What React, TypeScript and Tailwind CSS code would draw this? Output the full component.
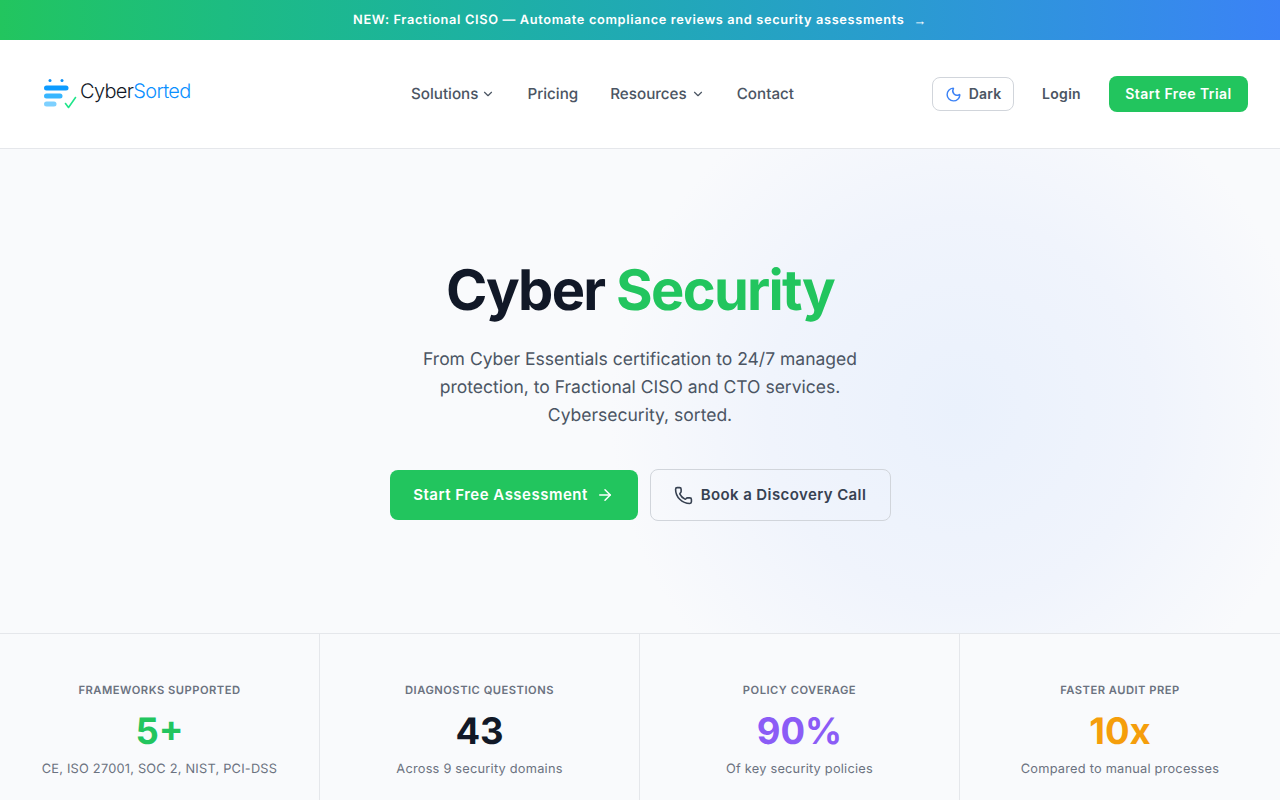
import { ChevronDown, Moon, ArrowRight, Phone } from "lucide-react";

function Logo() {
  return (
    <div className="flex items-center gap-[2px]">
      <svg width="36" height="32" viewBox="0 0 36 32" fill="none" className="block">
        <circle cx="8" cy="2.5" r="1.5" fill="#0b8ff5" />
        <circle cx="20" cy="2.5" r="1.5" fill="#0b8ff5" />
        <rect x="2" y="7.5" width="24.5" height="5" rx="2.5" fill="#0d9bff" />
        <rect x="2" y="15.5" width="18.5" height="5" rx="2.5" fill="#38b6ff" />
        <rect x="2" y="23.5" width="12.5" height="5" rx="2.5" fill="#7dd0ff" />
        <path d="M23.5 25.5 L26.5 29.5 L33.5 19.5" stroke="#1fe58a" strokeWidth="1.6" strokeLinecap="round" strokeLinejoin="round" />
      </svg>
      <span className="mb-[7px] text-[20px] font-light tracking-[-0.67px] text-[#111827]">
        Cyber<span className="text-[#0a90ff]">Sorted</span>
      </span>
    </div>
  );
}

function Stat({ label, value, color, note, last }: { label: string; value: string; color: string; note: string; last?: boolean }) {
  return (
    <div className={`flex flex-col items-center px-6 pt-[49px] pb-6 h-[167px] ${last ? "" : "border-r border-[#e5e7eb]"}`}>
      <div className="text-[11.2px] leading-[14px] font-semibold tracking-[0.5px] uppercase text-[#6b7280]">{label}</div>
      <div className={`mt-[14px] text-[36.5px] leading-[40px] font-bold ${color}`}>{value}</div>
      <div className="mt-[9px] text-[12.8px] leading-[20px] tracking-[0.22px] text-[#6b7280]">{note}</div>
    </div>
  );
}

export default function App() {
  return (
    <div className="h-screen overflow-hidden bg-white font-['Inter',sans-serif] antialiased [text-rendering:geometricPrecision]">
      <div className="h-10 pt-[1px] flex items-center justify-center gap-[9px] bg-gradient-to-r from-[#22c55e] to-[#3b82f6] text-white text-[12.8px] font-semibold tracking-[0.64px]">
        <span>NEW: Fractional CISO — Automate compliance reviews and security assessments</span>
        <span className="font-normal font-['Liberation_Sans',sans-serif] mt-[1px]">→</span>
      </div>
      <header className="h-[109px] flex items-center justify-between pl-[42px] pr-8 border-b border-[#e5e7eb] bg-white relative">
        <Logo />
        <nav className="absolute left-[411px] top-[43px] flex items-center gap-8 text-[15.2px] font-medium text-[#4b5563]">
          <span className="flex items-center gap-[3px]">Solutions <ChevronDown size={14} /></span>
          <span>Pricing</span>
          <span className="flex items-center gap-1">Resources <ChevronDown size={14} /></span>
          <span>Contact</span>
        </nav>
        <div className="flex items-center text-sm font-semibold">
          <button className="h-[34px] w-[82px] flex items-center justify-center gap-[7px] rounded-lg border border-[#d1d5db] text-[#4b5563] tracking-[0.15px]">
            <Moon size={17} className="text-[#3b82f6]" /> Dark
          </button>
          <button className="ml-7 text-[#4b5563] tracking-[0.3px]">Login</button>
          <button className="ml-7 h-9 w-[139px] rounded-lg bg-[#22c55e] text-white tracking-[0.45px]">Start Free Trial</button>
        </div>
      </header>
      <section className="h-[484px] relative overflow-hidden bg-[#f9fafc] flex flex-col items-center pt-[105px]">
        <div className="absolute left-[610px] top-[-89px] w-[700px] h-[700px] rounded-full bg-[radial-gradient(closest-side,#eaf1fc_0%,#f0f4fc_55%,#f9fafc_100%)]" />
        <div className="relative flex flex-col items-center">
          <h1 className="text-[56px] leading-[72px] font-bold tracking-[-1.7px] text-[#111827]">
            Cyber <span className="text-[#22c55e]">Security</span>
          </h1>
          <p className="mt-[20px] w-[480px] text-center text-[17.5px] leading-[28px] text-[#4b5563]">
            From Cyber Essentials certification to 24/7 managed protection, to Fractional CISO and CTO services. Cybersecurity, sorted.
          </p>
          <div className="mt-[39px] flex items-center gap-3">
            <button className="h-[50px] w-[248px] rounded-lg bg-[#22c55e] text-white text-[15px] font-semibold tracking-[0.5px] flex items-center justify-center gap-2">
              Start Free Assessment <ArrowRight size={18} />
            </button>
            <button className="h-[52px] w-[241px] rounded-lg border border-[#d1d5db] text-[#374151] text-[15px] font-semibold tracking-[0.4px] flex items-center justify-center gap-2">
              <Phone size={19} /> Book a Discovery Call
            </button>
          </div>
        </div>
      </section>
      <section className="grid grid-cols-4 bg-[#f9fafc] border-t border-[#e5e7eb]">
        <Stat label="Frameworks Supported" value="5+" color="text-[#22c55e]" note="CE, ISO 27001, SOC 2, NIST, PCI-DSS" />
        <Stat label="Diagnostic Questions" value="43" color="text-[#111827]" note="Across 9 security domains" />
        <Stat label="Policy Coverage" value="90%" color="text-[#8b5cf6]" note="Of key security policies" />
        <Stat label="Faster Audit Prep" value="10x" color="text-[#f59e0b]" note="Compared to manual processes" last />
      </section>
    </div>
  );
}
